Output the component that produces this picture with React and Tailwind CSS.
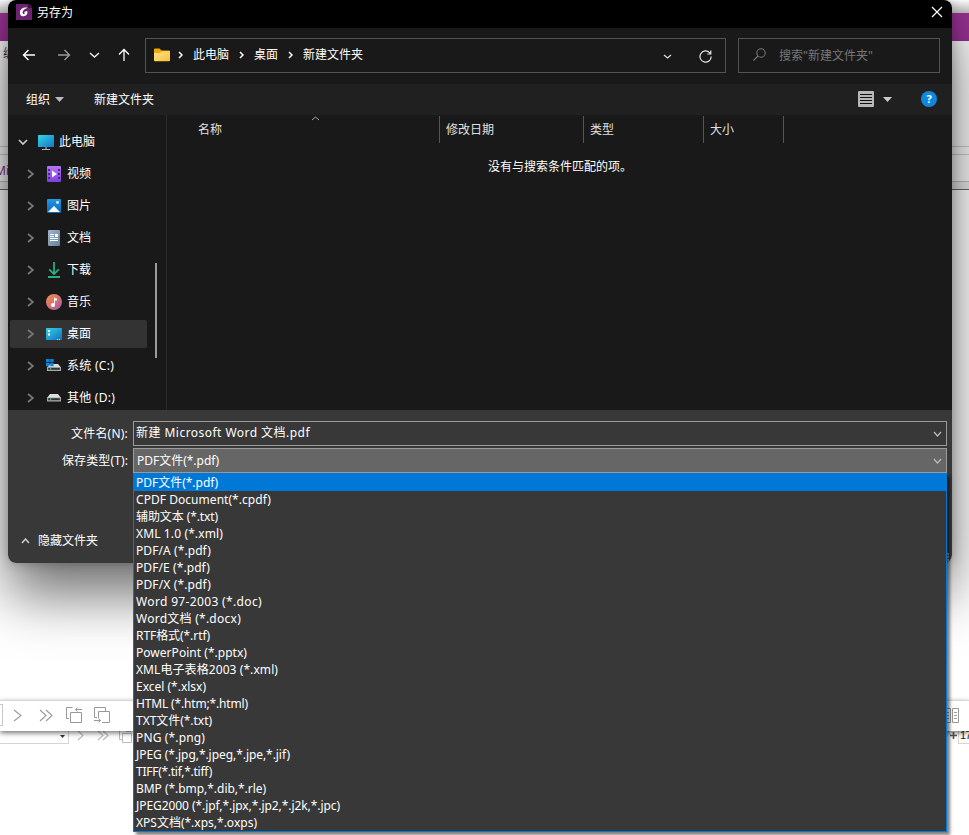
import React from "react";

const FILE_TYPES = [
  ["PDF文件(*.pdf)", 82],
  ["CPDF Document(*.cpdf)", 135],
  ["辅助文本 (*.txt)", 82],
  ["XML 1.0 (*.xml)", 87],
  ["PDF/A (*.pdf)", 75],
  ["PDF/E (*.pdf)", 74],
  ["PDF/X (*.pdf)", 75],
  ["Word 97-2003 (*.doc)", 126],
  ["Word文档 (*.docx)", 105],
  ["RTF格式(*.rtf)", 74],
  ["PowerPoint (*.pptx)", 111],
  ["XML电子表格2003 (*.xml)", 142],
  ["Excel (*.xlsx)", 70],
  ["HTML (*.htm;*.html)", 112],
  ["TXT文件(*.txt)", 76],
  ["PNG (*.png)", 69],
  ["JPEG (*.jpg,*.jpeg,*.jpe,*.jif)", 154],
  ["TIFF(*.tif,*.tiff)", 76],
  ["BMP (*.bmp,*.dib,*.rle)", 130],
  ["JPEG2000 (*.jpf,*.jpx,*.jp2,*.j2k,*.jpc)", 204],
  ["XPS文档(*.xps,*.oxps)", 121],
];

// Text whose letter spacing is adjusted so that it fills a given width.
function Fit({ text, width }) {
  const ref = React.useRef(null);
  const [spacing, setSpacing] = React.useState(0);
  React.useLayoutEffect(() => {
    const natural = ref.current.getBoundingClientRect().width;
    setSpacing((width - natural) / text.length);
  }, [text, width]);
  return (
    <span ref={ref} className="whitespace-pre" style={{ letterSpacing: spacing }}>
      {text}
    </span>
  );
}

function Chevron({ dir = "right", w = 6, h = 10, stroke = "#d0d0d0", sw = 1.5 }) {
  const d = {
    right: `M1 1L${w - 1} ${h / 2}L1 ${h - 1}`,
    down: `M1 1L${w / 2} ${h - 1}L${w - 1} 1`,
    up: `M1 ${h - 1}L${w / 2} 1L${w - 1} ${h - 1}`,
  }[dir];
  return (
    <svg width={w} height={h} viewBox={`0 0 ${w} ${h}`} fill="none" stroke={stroke} strokeWidth={sw} className="shrink-0">
      <path d={d} />
    </svg>
  );
}

function AppLogo() {
  return (
    <svg width="16" height="16" viewBox="0 0 16 16" className="shrink-0">
      <path d="M0 0H12.5V3.5H16V16H0Z" fill="#6c2470" />
      <path d="M13.3 0L16 2.8H13.3Z" fill="#6c2470" />
      <path d="M11.8 3.8C8 2.8 4 4.7 3.9 8.4C3.8 11.9 7 13 9.5 11.8C11.4 10.8 11.8 8.6 11.3 7.3C10 7 8.3 7.6 7.8 8.9C8.6 8.7 9.2 9 8.8 9.6C8.1 10.4 6.5 10.1 6.6 8.4C6.8 6 9 4.8 11.8 3.8Z" fill="#fff" />
    </svg>
  );
}

const treeIcons = {
  pc: (
    <svg width="16" height="16" viewBox="0 0 16 16">
      <defs><linearGradient id="pc" x2="1" y2="1"><stop stopColor="#34d3e4" /><stop offset="1" stopColor="#1377c9" /></linearGradient></defs>
      <rect y="1" width="16" height="12" rx=".6" fill="url(#pc)" />
      <path d="M7 13h2v2H7z" fill="#777" /><path d="M4 15h8v1H4z" fill="#b5b5b5" />
    </svg>
  ),
  video: (
    <svg width="14" height="16" viewBox="0 0 14 16">
      <defs><linearGradient id="vid" x2="0" y2="1"><stop stopColor="#b775f2" /><stop offset="1" stopColor="#7d3fe0" /></linearGradient></defs>
      <rect width="14" height="16" rx="1" fill="url(#vid)" />
      <path d="M1 3h2v2H1zM1 7h2v2H1zM1 11h2v2H1zM11 3h2v2h-2zM11 7h2v2h-2zM11 11h2v2h-2z" fill="#4c2396" />
      <path d="M5 4.5L10 8L5 11.5Z" fill="#fff" />
    </svg>
  ),
  image: (
    <svg width="14" height="14" viewBox="0 0 14 14">
      <defs><linearGradient id="img" x2="0" y2="1"><stop stopColor="#2398e4" /><stop offset="1" stopColor="#0966b6" /></linearGradient></defs>
      <rect width="14" height="14" rx="1" fill="url(#img)" />
      <path d="M1 13L6.4 7.4Q7 6.8 7.6 7.4L13 13Z" fill="#f4fbff" />
      <circle cx="10.5" cy="3.5" r="1.4" fill="#d8f1ff" />
    </svg>
  ),
  doc: (
    <svg width="12" height="16" viewBox="0 0 12 16">
      <defs><linearGradient id="doc" x2="1" y2="1"><stop stopColor="#a2b7ca" /><stop offset="1" stopColor="#627f9d" /></linearGradient></defs>
      <rect width="12" height="16" rx="1" fill="url(#doc)" />
      <path d="M2 4h4v1H2zM2 6h4v1H2zM7 4h3v3H7zM2 8h8v1H2zM2 10h8v1H2z" fill="#fff" />
    </svg>
  ),
  download: (
    <svg width="12" height="16" viewBox="0 0 12 16" fill="none" stroke="#22b58b" strokeWidth="1.7">
      <path d="M6 0V12M1.2 7.3L6 12L10.8 7.3" /><path d="M0 15H12" stroke="#30c99a" />
    </svg>
  ),
  music: (
    <svg width="16" height="16" viewBox="0 0 16 16">
      <defs><linearGradient id="mus" x2="1" y2="1"><stop stopColor="#f39350" /><stop offset=".5" stopColor="#d7706f" /><stop offset="1" stopColor="#9b59b4" /></linearGradient></defs>
      <circle cx="8" cy="8" r="8" fill="url(#mus)" />
      <path d="M8 3.3Q9 4.6 11 4.5V6.5H9V11.1A2 2 0 1 1 8 9.3Z" fill="#fff" />
    </svg>
  ),
  desktop: (
    <svg width="16" height="12" viewBox="0 0 16 12">
      <defs><linearGradient id="desk" x2="1" y2="1"><stop stopColor="#32d3e2" /><stop offset="1" stopColor="#126ec4" /></linearGradient></defs>
      <rect width="16" height="12" rx=".8" fill="url(#desk)" />
      <path d="M2 2h2v2H2zM2 5.5h2v2H2zM11 11h1v1h-1zM13 11h1v1h-1z" fill="#fff" />
    </svg>
  ),
  system: (
    <svg width="16" height="14" viewBox="0 0 16 14">
      <path d="M4 5H12L15 8.5H1Z" fill="#ddd" /><path d="M1 8h14v4H1z" fill="#a8a8a8" /><path d="M2.2 8.9h11.6v1.9H2.2z" fill="#333" />
      <path d="M0 0h3.5v3.3H0zM4.2 0h3.4v3.3H4.2zM0 4h3.5v3.2H0zM4.2 4h3.4v3.2H4.2z" fill="#0c86dc" /><path d="M4 9.2h1.2v1.2H4z" fill="#5fdd68" />
    </svg>
  ),
  drive: (
    <svg width="14" height="8" viewBox="0 0 14 8">
      <path d="M3 0H11L14 4H0Z" fill="#dedede" /><path d="M0 3.5h14V7.5H0z" fill="#a8a8a8" /><path d="M1.2 4.2h11.6v2H1.2z" fill="#333" /><path d="M3 4.6h1.2v1.2H3z" fill="#5fdd68" />
    </svg>
  ),
};

const TREE = [
  ["video", "视频"],
  ["image", "图片"],
  ["doc", "文档"],
  ["download", "下载"],
  ["music", "音乐"],
  ["desktop", "桌面"],
  ["system", "系统 (C:)", 47],
  ["drive", "其他 (D:)", 48],
];

function TitleBar() {
  return (
    <div className="flex h-7 shrink-0 items-center bg-black pl-2 pr-[9px] text-white">
      <div className="-mt-[4px]"><AppLogo /></div>
      <span className="ml-[5px] -mt-[3px]">另存为</span>
      <svg width="12" height="12" viewBox="0 0 12 12" className="-mt-[4px] ml-auto" stroke="#fff" strokeWidth="1.2">
        <path d="M1 1L11 11M11 1L1 11" />
      </svg>
    </div>
  );
}

function NavBar() {
  return (
    <div className="flex h-14 shrink-0 items-start bg-[#191919] pl-[14px] pr-3 pt-[10px]">
      <div className="-mt-px flex h-[35px] w-[123px] items-center">
        <svg width="14" height="14" viewBox="0 0 14 14" fill="none" stroke="#fff" strokeWidth="1.4"><path d="M13 7H1.5M6.5 2L1.5 7L6.5 12" /></svg>
        <svg width="14" height="14" viewBox="0 0 14 14" fill="none" stroke="#9a9a9a" strokeWidth="1.4" className="ml-[21px]"><path d="M1 7H12.5M7.5 2L12.5 7L7.5 12" /></svg>
        <div className="ml-[18px]"><Chevron dir="down" w={11} h={6} stroke="#eee" /></div>
        <svg width="12" height="14" viewBox="0 0 12 14" fill="none" stroke="#fff" strokeWidth="1.3" className="ml-[18px]"><path d="M6 13V1.5M1 6.5L6 1.5L11 6.5" /></svg>
      </div>
      <div className="flex h-[35px] w-[581px] items-center border border-[#535353] pl-2 text-white">
        <svg width="16" height="14" viewBox="0 0 16 14" className="-mt-[2px] shrink-0">
          <defs><linearGradient id="fold" x2="1" y2="1"><stop stopColor="#ffe291" /><stop offset="1" stopColor="#f9c132" /></linearGradient></defs>
          <path d="M0 1.5Q0 .5 1 .5H5.5L7.5 2.5H15Q16 2.5 16 3.5V12H0Z" fill="#f5a909" />
          <path d="M0 5H6L8 3.3H16V12.5Q16 13.3 15 13.3H1Q0 13.3 0 12.5Z" fill="url(#fold)" />
        </svg>
        <div className="flex items-center">
          <span className="-mt-px ml-2"><Chevron w={5} h={8} stroke="#fff" /></span>
          <span className="ml-[10px] -mt-[3px]">此电脑</span>
          <span className="-mt-px ml-[10px]"><Chevron w={5} h={8} stroke="#fff" /></span>
          <span className="ml-[10px] -mt-[3px]">桌面</span>
          <span className="-mt-px ml-[10px]"><Chevron w={5} h={8} stroke="#fff" /></span>
          <span className="ml-[10px] -mt-[3px]">新建文件夹</span>
        </div>
        <div className="ml-auto mt-[2px] flex items-center gap-[27px] pr-[13px]">
          <Chevron dir="down" w={9} h={5} stroke="#ddd" sw={1.2} />
          <svg width="13" height="13" viewBox="0 0 13 13" fill="none" stroke="#e5e5e5" strokeWidth="1.2">
            <path d="M12.2 6.5A5.6 5.6 0 1 1 10.6 2.6L11.5 3.7M11.8 .5V4H8.3" />
          </svg>
        </div>
      </div>
      <div className="ml-3 flex h-[35px] w-[202px] items-center border border-[#535353] pl-[14px] text-[#777]">
        <svg width="13" height="13" viewBox="0 0 13 13" fill="none" stroke="#777" strokeWidth="1.1" className="-mt-[3px]">
          <circle cx="8" cy="5" r="4.2" /><path d="M5 8L.5 12.5" />
        </svg>
        <span className="ml-[13px]"><Fit text={'搜索"新建文件夹"'} width={94} /></span>
      </div>
    </div>
  );
}

function Toolbar() {
  return (
    <div className="flex h-[31px] shrink-0 items-center bg-[#202020] pl-[18px] pr-[15px] text-white">
      <span>组织</span>
      <svg width="9" height="5" viewBox="0 0 9 5" className="ml-[5px]"><path d="M0 0H9L4.5 5Z" fill="#bbb" /></svg>
      <span className="ml-[30px]">新建文件夹</span>
      <svg width="16" height="16" viewBox="0 0 16 16" className="-mt-px ml-auto">
        <rect width="16" height="16" rx="1" fill="#b8b8b8" /><path d="M2 3.5H14M2 6.5H14M2 9.5H14M2 12.5H14" stroke="#111" />
      </svg>
      <svg width="9" height="5" viewBox="0 0 9 5" className="ml-[9px]"><path d="M0 0H9L4.5 5Z" fill="#ccc" /></svg>
      <div className="-mt-[2px] ml-[29px] flex size-4 items-center justify-center rounded-full bg-[#1088dc] text-[11px] font-bold leading-none text-white">?</div>
    </div>
  );
}

function Tree() {
  return (
    <div className="flex w-[159px] shrink-0 border-r border-[#2b2b2b] text-white">
      <div className="flex w-[139px] flex-col pl-[2px] pt-[11px]">
        <div className="flex h-8 shrink-0 items-center pl-2">
          <Chevron dir="down" w={10} h={6} stroke="#ccc" sw={1.7} />
          <span className="ml-[10px]">{treeIcons.pc}</span>
          <span className="-mt-[2px] ml-[5px]">此电脑</span>
        </div>
        {TREE.map(([icon, label, width]) => (
          <div key={icon} className={"my-[2px] flex h-7 shrink-0 items-center pl-[17px] " + (icon === "desktop" ? "rounded-[2px] bg-[#333]" : "")}>
            <Chevron w={7} h={10} stroke="#777" sw={1.8} />
            <span className="-mt-px ml-[11px] flex w-[18px] justify-center">{treeIcons[icon]}</span>
            <span className="-mt-[2px] ml-[4px] whitespace-nowrap">{width ? <Fit text={label} width={width} /> : label}</span>
          </div>
        ))}
      </div>
      <div className="ml-[8px] mt-[148px] h-[95px] w-[2px] bg-[#9c9c9c]" />
    </div>
  );
}

function FileList() {
  return (
    <div className="flex-1 text-[#e0e0e0]">
      <div className="flex h-7 pt-px">
        <div className="flex w-[273px] items-center border-r border-[#555] pl-[31px]">
          <span>名称</span>
          <span className="-mt-[23px] ml-[89px]"><Chevron dir="up" w={9} h={5} stroke="#aaa" sw={1} /></span>
        </div>
        <div className="flex w-36 items-center border-r border-[#555] pl-[6px]">修改日期</div>
        <div className="flex w-[120px] items-center border-r border-[#555] pl-[6px]">类型</div>
        <div className="flex w-20 items-center border-r border-[#555] pl-[6px]">大小</div>
      </div>
      <div className="mt-[15px] pl-[321px] text-white">没有与搜索条件匹配的项。</div>
    </div>
  );
}

function Fields() {
  return (
    <div className="h-[153px] shrink-0 bg-[#383838] pt-[11px] text-white">
      <div className="flex h-[25px] items-center">
        <span className="w-[120px] text-right"><Fit text="文件名(N):" width={57} /></span>
        <div className="ml-[5px] flex h-[25px] w-[814px] items-center justify-between border border-[#9b9b9b] pl-[2px] pr-1">
          <span className="-mt-[2px]"><Fit text="新建 Microsoft Word 文档.pdf" width={174} /></span>
          <Chevron dir="down" w={9} h={6} stroke="#bbb" sw={1.2} />
        </div>
      </div>
      <div className="mt-[2px] flex h-[25px] items-center">
        <span className="w-[120px] text-right"><Fit text="保存类型(T):" width={66} /></span>
        <div className="ml-[5px] flex h-[25px] w-[814px] items-center justify-between border border-[#9b9b9b] bg-[#666] pl-[3px] pr-1">
          <Fit text="PDF文件(*.pdf)" width={82} />
          <Chevron dir="down" w={9} h={6} stroke="#bbb" sw={1.2} />
        </div>
      </div>
      <div className="mt-[59px] flex items-center pl-[13px]">
        <Chevron dir="up" w={9} h={6} stroke="#ccc" />
        <span className="ml-2">隐藏文件夹</span>
      </div>
    </div>
  );
}

function PageViewIcon({ back }) {
  return (
    <svg width="17" height="17" viewBox="0 0 17 17" fill="none" stroke="#999" className="shrink-0">
      {back ? (
        <path d="M4.5 11V4.5H15.5V15.5H8M3 10.5H.5V.5H11.5V4M0 13.5H6.5M4.5 11.5L6.5 13.5L4.5 15.5" />
      ) : (
        <path d="M4.5 5.5H15.5V15.5H4.5ZM3 11.5H.5V.5H6.5M16 2.5H9.5M11.5 .5L9.5 2.5L11.5 4.5" />
      )}
    </svg>
  );
}

function BackgroundWindows() {
  return (
    <div className="absolute inset-0 flex flex-col bg-white">
      <div className="h-[13px] bg-gradient-to-b from-white to-[#bbb]" />
      <div className="h-7 bg-[#93308e]" />
      <div className="flex h-[106px] items-center overflow-hidden border-b border-[#c9c9c9] bg-[#f7f7f7] text-[#333]">
        <span className="-mt-[80px] ml-[3px]">编</span>
      </div>
      <div className="h-2 border-b border-[#c9c9c9] bg-[#f7f7f7]" />
      <div className="flex h-[27px] items-center border-b border-[#bdbdbd] bg-[#f7f7f7] text-[#872b87]">
        <span className="-ml-[5px] mt-[4px]">Microsoft</span>
      </div>
      <div className="h-2 border-b border-[#666] bg-[#e8e8e8]" />
      <div className="h-[510px] bg-white" />
      <div className="relative z-10 flex h-[31px] items-center border-t border-[#d8d8d8] bg-white pb-[2px] shadow-[0_2px_5px_rgba(0,0,0,.55)]">
        <div className="h-[22px] w-[3px] border-y border-r border-[#c8c8c8]" />
        <span className="ml-[10px]"><Chevron w={9} h={13} stroke="#999" sw={1.1} /></span>
        <span className="ml-[17px] flex"><Chevron w={8} h={13} stroke="#999" sw={1.1} /><span className="-ml-[2px]"><Chevron w={8} h={13} stroke="#999" sw={1.1} /></span></span>
        <span className="ml-[13px]"><PageViewIcon /></span>
        <span className="ml-[11px]"><PageViewIcon back /></span>
        <svg width="16" height="15" viewBox="0 0 16 15" className="ml-auto mr-[10px]" fill="none" stroke="#999">
          <path d="M2.5 .5H7.5V14.5H2.5ZM9.5 .5H15.5V14.5H9.5ZM4 4.5H6M4 7.5H6M4 10.5H6M11 4.5H14M11 7.5H14M11 10.5H14" />
        </svg>
      </div>
      <div className="flex h-[13px] items-center">
        <div className="flex h-[13px] w-[69px] items-center justify-end border-b border-r border-[#d5d5d5] pr-[3px]">
          <svg width="5" height="3" viewBox="0 0 5 3" className="-mt-[2px]"><path d="M0 0H5L2.5 3Z" fill="#333" /></svg>
        </div>
        <span className="-mt-1 ml-[8px]"><Chevron w={7} h={11} stroke="#bbb" sw={1.1} /></span>
        <span className="-mt-1 ml-[13px] flex"><Chevron w={7} h={11} stroke="#bbb" sw={1.1} /><span className="-ml-[2px]"><Chevron w={7} h={11} stroke="#bbb" sw={1.1} /></span></span>
        <svg width="13" height="13" viewBox="0 0 13 13" fill="none" stroke="#bbb" className="ml-[10px]"><path d="M3.5 2.5H12.5V11.5H3.5ZM3 8.5H.5V0M12 .5H7" /></svg>
        <svg width="7" height="7" viewBox="0 0 7 7" className="-mt-[4px] ml-auto"><path d="M3.5 0V7M0 3.5H7" stroke="#555" strokeWidth="1.6" /></svg>
        <div className="ml-px flex h-[13px] w-[11px] items-center border-b border-l border-[#d5d5d5] font-['Liberation_Sans',sans-serif] text-[11px] leading-[13px] text-[#222]">
          <span className="-mt-[4px] -ml-px tracking-[-0.5px]"><span className="ml-[2px]">17</span></span>
        </div>
      </div>
    </div>
  );
}

export default function App() {
  return (
    <div className="relative h-[835px] w-[969px] overflow-hidden bg-white font-['Noto_Sans','Noto_Sans_CJK_SC',sans-serif] text-[12px] leading-[17px]">
      <BackgroundWindows />

      <div className="absolute left-2 top-0 z-20 flex h-[563px] w-[944px] flex-col rounded-lg shadow-[0_32px_56px_rgba(0,0,0,.56),0_0_12px_rgba(0,0,0,.25)]">
        <div className="flex flex-1 flex-col overflow-hidden rounded-lg">
          <TitleBar />
          <NavBar />
          <Toolbar />
          <div className="flex h-[295px] shrink-0 overflow-hidden bg-[#191919]">
            <Tree />
            <FileList />
          </div>
          <Fields />
        </div>
      </div>

      <div className="absolute left-[945px] top-[553px] z-30 flex flex-col gap-px">
        <i className="h-[2px] w-1 bg-[#999]" />
        <i className="h-[2px] w-1 bg-[#999]" />
        <i className="h-[2px] w-1 bg-[#999]" />
      </div>

      <div className="absolute left-[133px] top-[473px] z-30 h-[359px] w-[814px] border border-t-0 border-[#0078d7] bg-[#383838] text-white shadow-[3px_3px_3px_rgba(0,0,0,.5)]">
        {FILE_TYPES.map(([label, width], i) => (
          <div key={label} className={"flex items-center pl-[2px] " + (i === 0 ? "h-[18px] bg-[#0078d7]" : "h-[17px]")}>
            <Fit text={label} width={width} />
          </div>
        ))}
      </div>
    </div>
  );
}
